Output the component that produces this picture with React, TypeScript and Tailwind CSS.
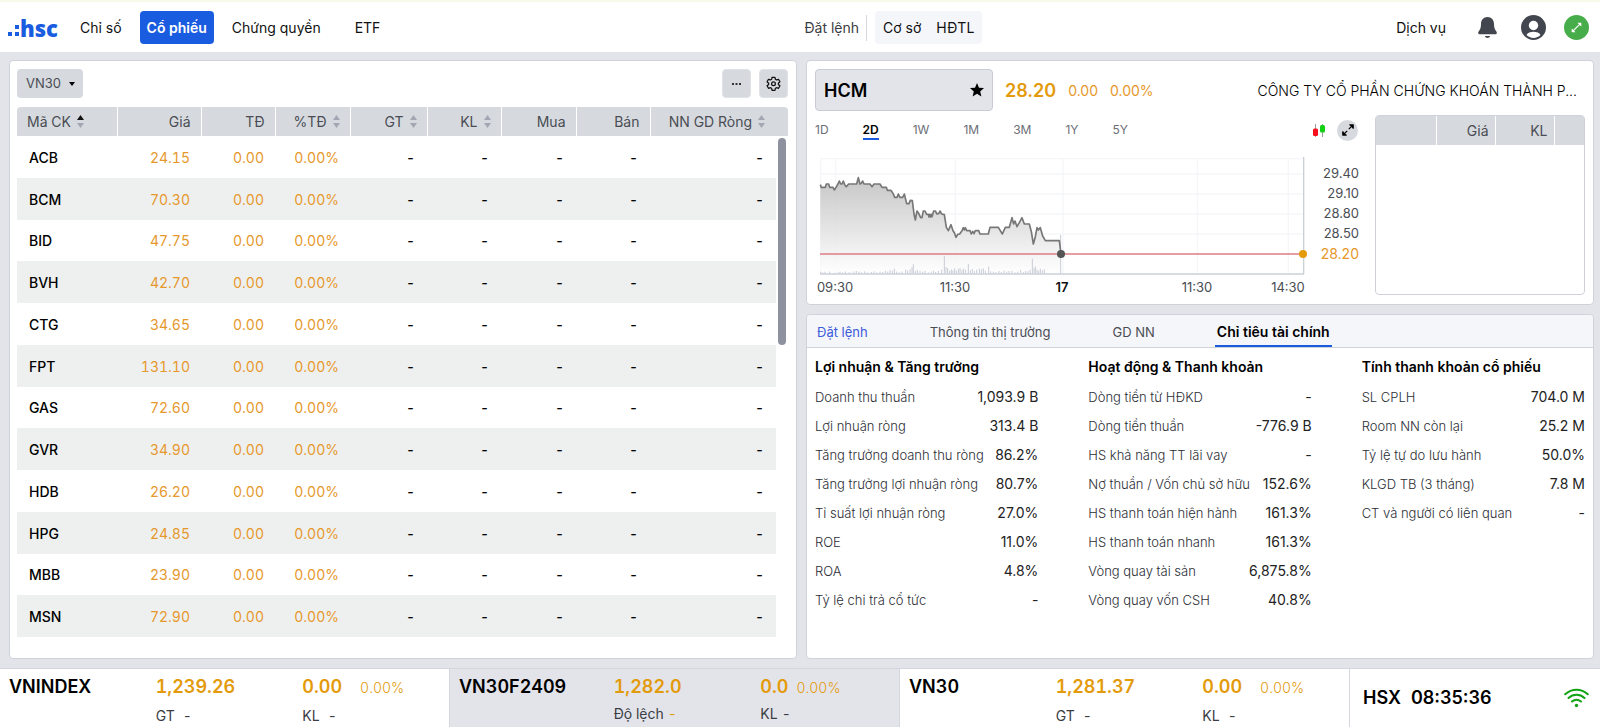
import { useState } from 'react';
import clsx from 'clsx';

const MAIN_MENUS = ['Chỉ số', 'Cổ phiếu', 'Chứng quyền', 'ETF'];
const RANGES = ['1D', '2D', '1W', '1M', '3M', '1Y', '5Y'];
const DETAIL_TABS = ['Đặt lệnh', 'Thông tin thị trường', 'GD NN', 'Chỉ tiêu tài chính'];

const STOCKS = [
  { code: 'ACB', price: '24.15' },
  { code: 'BCM', price: '70.30' },
  { code: 'BID', price: '47.75' },
  { code: 'BVH', price: '42.70' },
  { code: 'CTG', price: '34.65' },
  { code: 'FPT', price: '131.10' },
  { code: 'GAS', price: '72.60' },
  { code: 'GVR', price: '34.90' },
  { code: 'HDB', price: '26.20' },
  { code: 'HPG', price: '24.85' },
  { code: 'MBB', price: '23.90' },
  { code: 'MSN', price: '72.90' },
];

const COLUMNS = [
  { label: 'Giá', sortable: false },
  { label: 'TĐ', sortable: false },
  { label: '%TĐ', sortable: true },
  { label: 'GT', sortable: true },
  { label: 'KL', sortable: true },
  { label: 'Mua', sortable: false },
  { label: 'Bán', sortable: false },
];

const FINANCIALS = [
  {
    title: 'Lợi nhuận & Tăng trưởng',
    rows: [
      ['Doanh thu thuần', '1,093.9 B'],
      ['Lợi nhuận ròng', '313.4 B'],
      ['Tăng trưởng doanh thu ròng', '86.2%'],
      ['Tăng trưởng lợi nhuận ròng', '80.7%'],
      ['Tỉ suất lợi nhuận ròng', '27.0%'],
      ['ROE', '11.0%'],
      ['ROA', '4.8%'],
      ['Tỷ lệ chi trả cổ tức', '-'],
    ],
  },
  {
    title: 'Hoạt động & Thanh khoản',
    rows: [
      ['Dòng tiền từ HĐKD', '-'],
      ['Dòng tiền thuần', '-776.9 B'],
      ['HS khả năng TT lãi vay', '-'],
      ['Nợ thuần / Vốn chủ sở hữu', '152.6%'],
      ['HS thanh toán hiện hành', '161.3%'],
      ['HS thanh toán nhanh', '161.3%'],
      ['Vòng quay tài sản', '6,875.8%'],
      ['Vòng quay vốn CSH', '40.8%'],
    ],
  },
  {
    title: 'Tính thanh khoản cổ phiếu',
    rows: [
      ['SL CPLH', '704.0 M'],
      ['Room NN còn lại', '25.2 M'],
      ['Tỷ lệ tự do lưu hành', '50.0%'],
      ['KLGD TB (3 tháng)', '7.8 M'],
      ['CT và người có liên quan', '-'],
    ],
  },
];

const INDEXES = [
  { name: 'VNINDEX', price: '1,239.26', change: '0.00', label: 'GT', future: false },
  { name: 'VN30F2409', price: '1,282.0', change: '0.0', label: 'Độ lệch', future: true },
  { name: 'VN30', price: '1,281.37', change: '0.00', label: 'GT', future: false },
];

const PRICE_LINE =
  '61,224 64,232 76,232 79,222 86,222 89,232 99,232 103,240 108,232 114,222 118,213 122,222 126,222 130,213 134,224 139,230 146,222 170,222 175,203 180,222 184,220 188,213 192,222 210,222 216,230 222,222 240,222 246,232 259,232 262,241 273,241 280,252 284,262 291,262 295,252 300,262 308,262 313,252 320,281 327,281 331,271 337,272 342,312 346,330 351,303 356,310 362,323 366,323 370,303 375,303 380,313 385,313 387,321 389,313 392,321 394,313 396,320 401,303 406,303 411,312 416,311 420,303 425,312 433,314 439,352 445,362 453,344 459,362 463,368 468,382 473,373 479,372 486,362 490,353 493,360 496,353 500,362 510,362 514,372 518,364 522,371 526,362 536,362 540,372 565,372 570,352 595,352 607,372 616,352 628,352 636,323 641,342 645,333 651,350 658,338 666,323 673,342 688,342 694,365 700,402 706,380 711,353 715,360 721,353 728,378 736,392 778,392 783,432';

// [x, height] of every volume bar
const VOLUMES = [
  [62, 6], [68, 4], [75, 6], [89, 6], [106, 3], [115, 4], [120, 6], [128, 4], [136, 7], [147, 4], [154, 3],
  [162, 7], [169, 8], [177, 6], [184, 4], [194, 7], [202, 4], [214, 5], [222, 7], [230, 4], [240, 6], [248, 5],
  [256, 9], [263, 6], [270, 11], [277, 9], [283, 15], [290, 6], [298, 4], [306, 7], [317, 12], [323, 9],
  [330, 13], [336, 20], [340, 28], [346, 8], [352, 12], [360, 9], [368, 6], [375, 9], [385, 4], [394, 6],
  [401, 9], [407, 5], [415, 8], [425, 12], [433, 53], [438, 20], [443, 17], [449, 9], [454, 13], [459, 10],
  [464, 16], [469, 9], [475, 14], [480, 17], [486, 11], [491, 15], [497, 12], [505, 29], [511, 10], [517, 14],
  [523, 8], [530, 12], [538, 15], [544, 13], [550, 16], [556, 9], [566, 21], [572, 7], [580, 6], [588, 5],
  [597, 8], [604, 5], [612, 9], [620, 6], [627, 8], [636, 9], [645, 4], [653, 6], [662, 11], [670, 5],
  [677, 8], [684, 7], [690, 12], [697, 45], [702, 17], [706, 22], [711, 12], [716, 9], [721, 15], [727, 10],
  [733, 13], [782, 116],
];

const PRICE_TICKS = ['29.40', '29.10', '28.80', '28.50'];

function SortIcon({ asc = false }: { asc?: boolean }) {
  return (
    <svg width="7" height="13" viewBox="0 0 7 13" className="ml-1.5 inline-block shrink-0">
      <path d="M3.5 0 7 5H0z" fill={asc ? '#111' : '#a3a7b3'} />
      <path d="M3.5 13 7 8H0z" fill="#a3a7b3" />
    </svg>
  );
}

function ExpandIcon({ className }: { className?: string }) {
  return (
    <svg viewBox="0 0 12 12" fill="none" stroke="currentColor" strokeWidth="1.2" className={className}>
      <path d="M7.500 1H11v3.500M4.500 11H1V7.500M11 1 6.800 5.200M1 11l4.200-4.200" />
      <path d="M8.500 1H11v2.500zM3.500 11H1V8.500z" fill="currentColor" />
    </svg>
  );
}

function Header() {
  return (
    <header className="flex h-[52px] items-center border-t-2 border-[#f8faea] bg-white pt-px pr-[11px] pl-2 text-sm text-[#111]">
      <div className="flex w-1/2 items-center">
        <a href="#home" className="mr-[14px] flex items-center text-[#1a5ce0]">
          <svg width="12" height="20" viewBox="0 0 12 20" fill="currentColor">
            <path d="M0 14h4v4H0zM7 14h4v4H7zM7 7h4v4H7z" />
          </svg>
          <span className="font-['Open_Sans'] text-[22px] leading-8 font-extrabold">hsc</span>
        </a>
        <nav className="flex items-center gap-[10px]">
          {MAIN_MENUS.map((menu) => (
            <a
              key={menu}
              href={`#${menu}`}
              className={clsx(
                'flex h-[33px] items-center rounded',
                menu === 'Cổ phiếu' ? 'bg-[#1a5ce0] px-[7px] font-semibold text-white' : 'px-2',
                menu === 'ETF' && 'ml-2',
              )}
            >
              {menu}
            </a>
          ))}
        </nav>
      </div>
      <div className="flex w-1/2 items-center pl-[6px]">
        <span className="border-r border-[#d3d6de] py-[3px] pr-[7px] text-[#3a3d44]">Đặt lệnh</span>
        <div className="ml-2 flex h-[33px] items-center gap-[15px] rounded bg-[#f5f6fa] px-2">
          <button>Cơ sở</button>
          <button>HĐTL</button>
        </div>
        <a href="#services" className="ml-auto">
          Dịch vụ
        </a>
        <button aria-label="notifications" className="ml-8">
          <svg width="19" height="22" viewBox="0 0 19 22" fill="#42464e">
            <path d="M9.500 0C5.500 0 3 3 3 6.800c0 4-.7 5.700-2.200 7.400C-.5 15.800.4 17.300 2 17.300h15c1.600 0 2.500-1.500 1.200-3.100C16.700 12.500 16 10.800 16 6.800 16 3 13.500 0 9.500 0zM6.800 19h5.400c-.4 1.300-1.400 2-2.700 2s-2.300-.7-2.700-2z" />
          </svg>
        </button>
        <button aria-label="account" className="ml-6">
          <svg width="25" height="25" viewBox="0 0 25 25">
            <circle cx="12.500" cy="12.500" r="12.500" fill="#42464e" />
            <circle cx="12.500" cy="10.500" r="4.700" fill="#fff" />
            <path d="M5.500 20c1-2.500 4-3.200 7-3.200s6 .7 7 3.200c-1.800 1.800-4.200 2.900-7 2.900s-5.200-1.100-7-2.900z" fill="#fff" />
          </svg>
        </button>
        <button
          aria-label="fullscreen"
          className="ml-[18px] flex size-[25px] items-center justify-center rounded-full bg-[#47ad4b] text-white"
        >
          <svg width="11" height="11" viewBox="0 0 12 12" fill="none" stroke="currentColor" strokeWidth="1.4">
            <path d="M2 10 10 2" />
            <path d="M7.500 1H11v3.500zM4.500 11H1V7.500z" fill="currentColor" strokeWidth="0.5" />
          </svg>
        </button>
      </div>
    </header>
  );
}

function StockTable() {
  return (
    <section className="rounded border border-[#cfd2da] bg-white pt-2 pr-2 pl-[7px]">
      <div className="mb-[9px] flex items-center justify-between">
        <div className="relative">
          <select
            aria-label="watchlist"
            className="h-[29px] w-[66px] appearance-none rounded bg-[#d6dadf] pl-[9px] text-[13px] text-[#4a4d54]"
          >
            <option>VN30</option>
          </select>
          <svg width="6" height="4" viewBox="0 0 6 4" className="pointer-events-none absolute top-[13px] right-2">
            <path d="M0 0h6L3 4z" />
          </svg>
        </div>
        <div className="flex gap-2">
          <button
            aria-label="more"
            className="flex size-[29px] items-center justify-center rounded border border-[#dfe2e6] bg-[#d6dadf]"
          >
            <svg width="9" height="2" viewBox="0 0 9 2">
              <path d="M0 0h2v2H0zM3.500 0h2v2h-2zM7 0h2v2H7z" fill="#333" />
            </svg>
          </button>
          <button
            aria-label="settings"
            className="flex size-[29px] items-center justify-center rounded border border-[#dfe2e6] bg-[#d6dadf]"
          >
            <svg width="15" height="15" viewBox="0 0 24 24" fill="none" stroke="#111" strokeWidth="2" strokeLinejoin="round">
              <path d="M9.700 2h4.600l.7 3.300 1.800 1L20 5.300l2.300 4L19.800 11.500v2.000l2.500 2.200-2.300 4-3.200-1-1.800 1-.7 3.300H9.700L9 19.700l-1.800-1-3.200 1-2.300-4 2.500-2.200v-2L1.700 9.300l2.300-4 3.200 1 1.800-1z" />
              <circle cx="12" cy="12.500" r="3" />
            </svg>
          </button>
        </div>
      </div>
      <table className="h-[530px] w-full table-fixed text-right text-sm tabular-nums">
        <colgroup>
          <col className="w-[100px]" />
          <col className="w-[84px]" />
          <col className="w-[74px]" />
          <col className="w-[75px]" />
          <col className="w-[77px]" />
          <col className="w-[74px]" />
          <col className="w-[75px]" />
          <col className="w-[74px]" />
          <col className="w-[126px]" />
          <col className="w-3" />
        </colgroup>
        <thead>
          <tr className="h-[29px] text-[#4a4d54]">
            <th className="rounded-tl border-r border-white bg-[#d6dadf] pl-[10px] text-left font-normal">
              <span className="flex items-center">
                Mã CK
                <SortIcon asc />
              </span>
            </th>
            {COLUMNS.map((col) => (
              <th key={col.label} className="border-r border-white bg-[#d6dadf] pr-[10px] font-normal">
                <span className="flex items-center justify-end">
                  {col.label}
                  {col.sortable && <SortIcon />}
                </span>
              </th>
            ))}
            <th colSpan={2} className="rounded-tr bg-[#d6dadf] pr-[23px] font-normal">
              <span className="flex items-center justify-end">
                NN GD Ròng
                <SortIcon />
              </span>
            </th>
          </tr>
        </thead>
        <tbody>
          {STOCKS.map((stock, i) => {
            const bg = i % 2 === 1 ? 'bg-[#eef0f0]' : 'bg-white';
            const price = clsx(bg, 'pt-[2px] pr-[11px] text-[#e6982b]');
            const empty = clsx(bg, 'pt-[2px] pr-3 font-medium text-black');
            return (
              <tr key={stock.code}>
                <td className={clsx(bg, 'pt-[2px] pl-3 text-left font-medium text-black')}>{stock.code}</td>
                <td className={price}>{stock.price}</td>
                <td className={price}>0.00</td>
                <td className={price}>0.00%</td>
                <td className={empty}>-</td>
                <td className={empty}>-</td>
                <td className={empty}>-</td>
                <td className={empty}>-</td>
                <td className={empty}>-</td>
                {i === 0 && (
                  <td rowSpan={STOCKS.length} className="px-[2px] pt-[2px] align-top">
                    <div className="h-[207px] rounded-full bg-[#8d929e]" />
                  </td>
                )}
              </tr>
            );
          })}
        </tbody>
      </table>
    </section>
  );
}

function PriceChart() {
  return (
    <svg viewBox="0 0 544 140" className="mt-[9px] w-full overflow-visible" fontSize="13" fill="#4a4d54">
      <svg x="5" y="3" width="484" height="118" viewBox="60 141 1452 354" className="overflow-visible">
        <defs>
          <linearGradient id="area" x1="0" y1="0" x2="0" y2="1">
            <stop offset="0" stopColor="#bdbdbd" />
            <stop offset="1" stopColor="#ffffff" />
          </linearGradient>
        </defs>
        <path
          d="M61 146H1511M61 192H1511M61 252H1511M61 312H1511M61 372H1511M62 146V491M107 146V491M466 146V491M789 146V491M1192 146V491M1465 146V491"
          stroke="#f5f6f9"
          strokeWidth="4"
          fill="none"
        />
        <polygon points={`61,491 ${PRICE_LINE} 783,491`} fill="url(#area)" fillOpacity="0.85" />
        <path
          d={VOLUMES.map(([x, h]) => `M${x} 491v-${h}`).join('')}
          stroke="#c9ccd6"
          strokeWidth="3"
          fill="none"
        />
        <polyline points={PRICE_LINE} fill="none" stroke="#777" strokeWidth="5" strokeLinejoin="round" />
        <path d="M60 492H1512M1511 141V492" stroke="#ccd0d8" strokeWidth="4" fill="none" />
        <path d="M60 432H1511" stroke="#dc7c85" strokeWidth="5" />
        <circle cx="783" cy="432" r="12" fill="#555" />
        <circle cx="1509" cy="432" r="12" fill="#e39a0b" />
      </svg>
      {PRICE_TICKS.map((tick, i) => (
        <text key={tick} x="544" y={24 + i * 20} textAnchor="end">
          {tick}
        </text>
      ))}
      <text x="544" y="105" textAnchor="end" fontSize="14" fill="#e6982b">
        28.20
      </text>
      <g textAnchor="middle">
        <text x="20" y="138">09:30</text>
        <text x="140" y="138">11:30</text>
        <text x="247" y="138" fontWeight="600" fill="#111">17</text>
        <text x="382" y="138">11:30</text>
        <text x="473" y="138">14:30</text>
      </g>
    </svg>
  );
}

function StockPanel() {
  const [range, setRange] = useState('2D');

  return (
    <section className="rounded border border-[#cfd2da] bg-white px-2 pt-2 pb-[9px]">
      <div className="flex items-center">
        <div className="flex h-[42px] w-[178px] items-center rounded border border-[#c9ccd6] bg-[#e3e4ea] px-2">
          <input
            aria-label="symbol"
            defaultValue="HCM"
            className="min-w-0 flex-1 bg-transparent pt-[2px] text-lg font-semibold text-black outline-none"
          />
          <button aria-label="favorite">
            <svg width="14" height="14" viewBox="0 0 14 14">
              <path d="M7 0l2 4.700 5 .4-3.800 3.300L11.400 13.500 7 10.800 2.600 13.500l1.200-5.100L0 5.100l5-.4z" />
            </svg>
          </button>
        </div>
        <div className="flex items-center gap-3 pt-[2px] pl-3 text-sm text-[#e6982b]">
          <span className="text-lg leading-5 font-semibold text-[#e39a0b]">28.20</span>
          <span>0.00</span>
          <span>0.00%</span>
        </div>
        <span className="ml-auto truncate pt-[2px] pr-2 text-sm font-light text-black">
          CÔNG TY CỔ PHẦN CHỨNG KHOÁN THÀNH P...
        </span>
      </div>
      <div className="mt-1 flex gap-4">
        <div className="min-w-0 flex-1">
          <div className="flex h-[30px] items-center">
            <div className="flex gap-[34px] pt-[2px] text-xs">
              {RANGES.map((item) => (
                <button
                  key={item}
                  onClick={() => setRange(item)}
                  className={clsx(
                    'border-b-2',
                    item === range ? 'border-[#1a5ce0] font-semibold text-black' : 'border-transparent text-[#6b6e76]',
                  )}
                >
                  {item}
                </button>
              ))}
            </div>
            <button aria-label="candles" className="ml-auto">
              <svg width="12" height="13" viewBox="0 0 12 13">
                <path d="M2.500 0v13M9.500 0v13" stroke="#9a9a9a" />
                <rect y="4.500" width="5" height="7.500" rx="1.500" fill="#f5101c" />
                <rect x="7" y="1" width="5" height="7.500" rx="1.500" fill="#12d012" />
              </svg>
            </button>
            <button
              aria-label="expand chart"
              className="mr-px ml-3 flex size-[21px] items-center justify-center rounded-full bg-[#d6dadf] text-black"
            >
              <ExpandIcon className="size-3" />
            </button>
          </div>
          <PriceChart />
        </div>
        <div className="h-[180px] w-[210px] rounded border border-[#cfd2da]">
          <table className="w-full table-fixed text-right text-sm">
            <thead>
              <tr className="h-[29px] bg-[#d6dadf] text-[#4a4d54]">
                <th className="w-[60px] border-r border-white" />
                <th className="border-r border-white pr-[6px] font-normal">Giá</th>
                <th className="border-r border-white pr-[6px] font-normal">KL</th>
                <th className="w-[30px]" />
              </tr>
            </thead>
          </table>
        </div>
      </div>
    </section>
  );
}

function DetailPanel() {
  const [tab, setTab] = useState('Chỉ tiêu tài chính');

  return (
    <section className="flex-1 rounded border border-[#cfd2da] bg-white text-sm">
      <div className="flex h-[33px] gap-[58px] rounded-t border-b border-[#cfd2da] bg-[#f5f6fa] px-2">
        {DETAIL_TABS.map((item) => (
          <button
            key={item}
            onClick={() => setTab(item)}
            className={clsx(
              'border-b-2 px-[2px] pt-1',
              item === tab ? 'border-[#1a5ce0] font-semibold text-black' : 'border-transparent text-[13px]',
              item !== tab && (item === 'Đặt lệnh' ? 'text-[#3b5bdb]' : 'text-[#4a4d54]'),
            )}
          >
            {item}
          </button>
        ))}
      </div>
      <div className="grid grid-cols-3 gap-[50px] px-2 pt-1">
        {FINANCIALS.map((group) => (
          <div key={group.title}>
            <h3 className="flex h-[30px] items-center font-semibold text-black">{group.title}</h3>
            {group.rows.map(([label, value]) => (
              <div key={label} className="flex h-[29px] items-center justify-between pt-px whitespace-nowrap">
                <span className="text-[13px] font-light text-[#2b2e35]">{label}</span>
                <span className="text-[#222]">{value}</span>
              </div>
            ))}
          </div>
        ))}
      </div>
    </section>
  );
}

function Footer() {
  return (
    <footer className="flex h-[59px] border-t border-[#d3d6de] bg-white">
      {INDEXES.map((index) => {
        const subRow = clsx('flex text-sm text-[#3a3d44]', index.future ? 'mt-[3px] gap-1' : 'mt-[5px] gap-2');
        return (
          <div
            key={index.name}
            className={clsx(
              'grid w-[450px] grid-cols-3 border-r border-[#d3d6de] pt-1 pl-[9px] tabular-nums',
              index.future && 'bg-[#e3e4ea]',
            )}
          >
            <strong className="text-lg leading-7 font-semibold text-black">{index.name}</strong>
            <div className={clsx(index.future && 'pl-2')}>
              <div className="text-lg leading-7 font-semibold text-[#e39a0b]">{index.price}</div>
              <div className={subRow}>
                <span>{index.label}</span>
                <span className={clsx(index.future && 'text-[#e39a0b]')}>-</span>
              </div>
            </div>
            <div className={clsx(index.future && 'pl-2')}>
              <div className={clsx('flex items-baseline text-[#e39a0b]', index.future ? 'gap-2' : 'gap-[18px]')}>
                <span className="text-lg leading-7 font-semibold">{index.change}</span>
                <span className="text-sm font-light">0.00%</span>
              </div>
              <div className={subRow}>
                <span>KL</span>
                <span>-</span>
              </div>
            </div>
          </div>
        );
      })}
      <div className="flex flex-1 items-center justify-between pr-[11px] pl-[13px] text-lg font-semibold text-black">
        <span className="flex gap-[10px]">
          <span>HSX</span>
          <time>08:35:36</time>
        </span>
        <svg width="25" height="20" viewBox="0 0 25 20" fill="none" stroke="#12a312" strokeWidth="2" strokeLinecap="round">
          <path d="M1.200 6.200c6.500-6 16.100-6 22.600 0M4.500 10c4.700-4.200 11.300-4.200 16 0M8 13.500c2.700-2.200 6.300-2.200 9 0" />
          <circle cx="12.500" cy="17.500" r="1.700" fill="#12a312" stroke="none" />
        </svg>
      </div>
    </footer>
  );
}

export default function App() {
  return (
    <div className="flex min-h-screen flex-col bg-[#e3e4ea] font-['Inter','Liberation_Sans',sans-serif]">
      <Header />
      <main className="grid flex-1 grid-cols-2 gap-[9px] pt-2 pr-[6px] pb-[9px] pl-[9px]">
        <StockTable />
        <div className="flex min-w-0 flex-col gap-[9px]">
          <StockPanel />
          <DetailPanel />
        </div>
      </main>
      <Footer />
    </div>
  );
}
